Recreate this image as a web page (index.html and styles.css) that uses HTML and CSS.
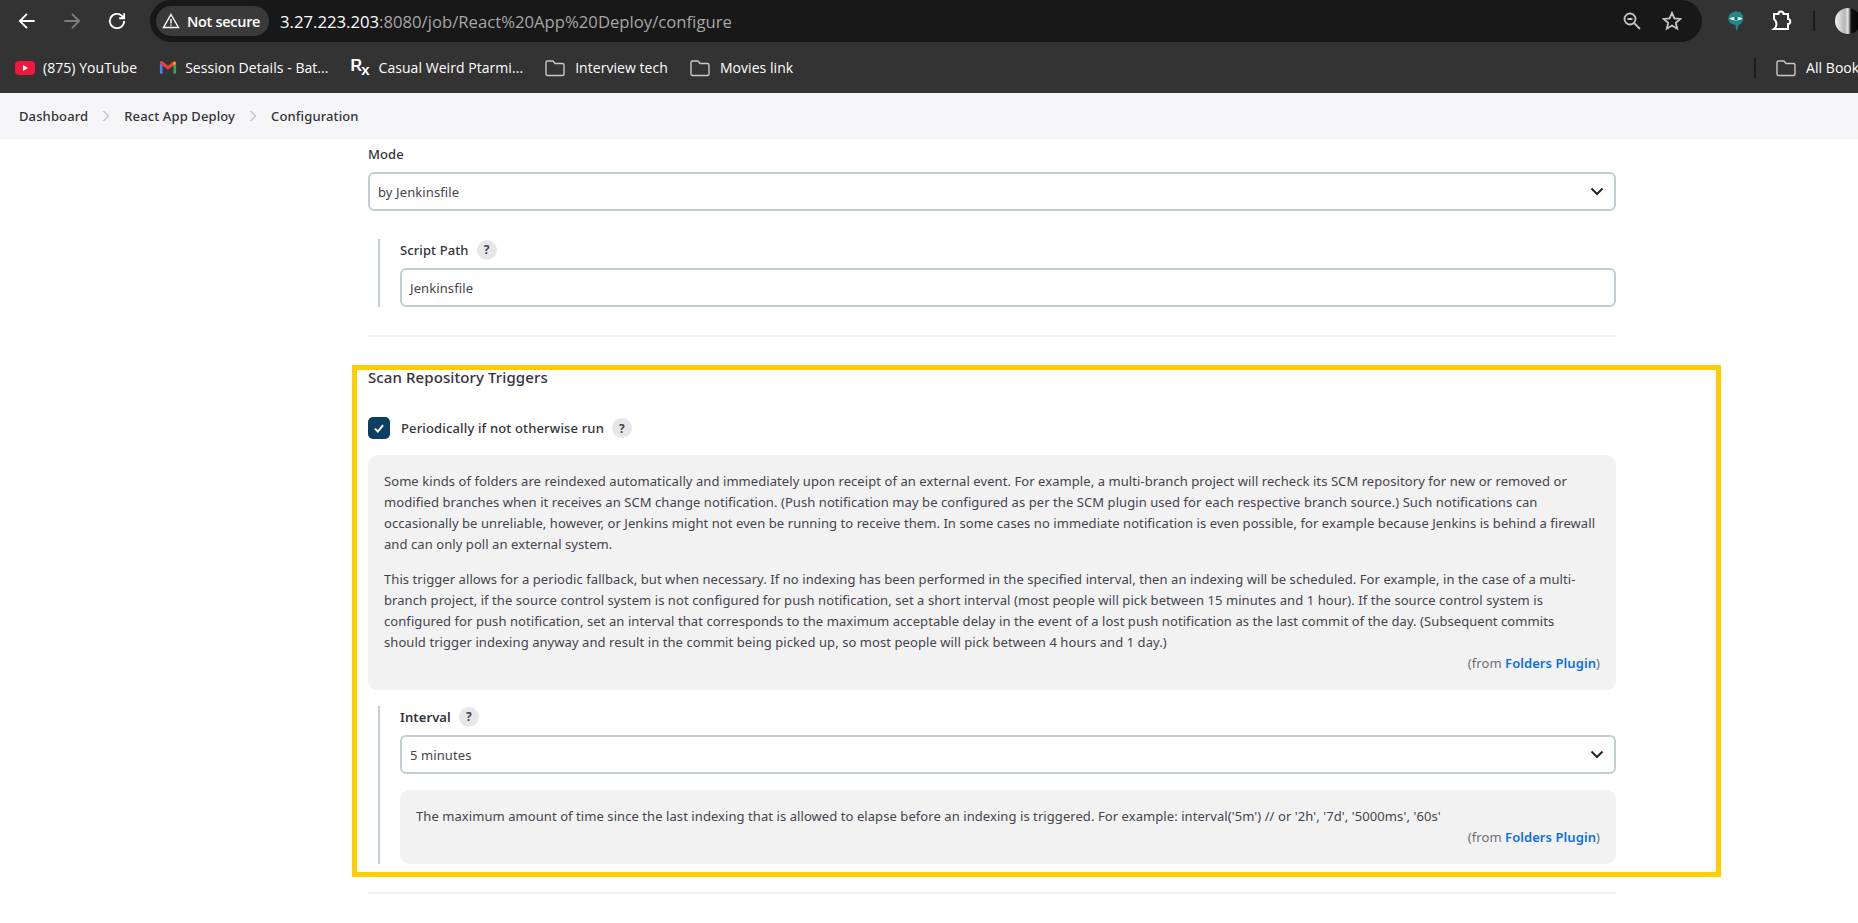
FILE: index.html
```html
<!DOCTYPE html>
<html>
<head>
    <title>React App Deploy Config [Jenkins]</title>
    <link rel="stylesheet" href="styles.css">
</head>
<body>
    <div class="browser">
        <div class="toolbar">
            <div class="nav">
                <svg class="nav-icon" viewBox="0 0 20 20"><path d="M17 10H3.500M10 3.500L3.500 10l6.500 6.500"/></svg>
                <svg class="nav-icon off" viewBox="0 0 20 20"><path d="M3 10h13.500M10 3.500l6.500 6.500-6.500 6.500"/></svg>
                <svg class="nav-icon" viewBox="0 0 20 20"><path d="M16.500 10a6.500 6.500 0 1 1-2-4.700L16.500 7.500M16.500 3v4.500H12"/></svg>
            </div>
            <div class="omnibox">
                <div class="chip">
                    <svg class="warn" viewBox="0 0 18 18"><path d="M9 2.500L16.500 15.500H1.500ZM9 7v4.500M9 12.500v1.200"/></svg>
                    <span>Not secure</span>
                </div>
                <div class="url"><b>3.27.223.203</b>:8080/job/React%20App%20Deploy/configure</div>
                <svg class="omni-icon zoom-out" viewBox="0 0 20 20"><circle cx="8" cy="8" r="5.500"/><path d="M5.500 8h5M12.200 12.200L18 18"/></svg>
                <svg class="omni-icon star" viewBox="0 0 20 20"><path d="M10 1.800l2.400 5.600 6 .5-4.600 3.900 1.400 5.900L10 14.600l-5.200 3.100 1.400-5.900L1.600 7.900l6-.5Z"/></svg>
            </div>
            <svg class="ext" viewBox="0 0 16 20"><path class="ext-body" d="M8 0l2 1 2.500-.2.800 2 2 1.400-.5 2.300.7 2.300-1.500 2-1 2.200-2.500.7L9 20l-1-2-.5-4.300-2.500-.2-2.500-1.200L1 10.200 0 8l.7-2.500L1.500 3.500 3.500 2 6 1Z"/><path class="ext-eye" d="M1.500 7.500C4 5.500 12 5.500 14.500 7.500 12 10 4 10 1.500 7.500Z"/><rect class="ext-pupil" x="6.500" y="6" width="3" height="3"/></svg>
            <svg class="puzzle" viewBox="0 0 24 24"><path d="M5 5h4.500c0-3.500 5-3.500 5 0H19v5c3 0 3 5 0 5v5H5c2-1.500 2.500-3 2.500-4.500S7 11.500 5 10Z"/></svg>
            <div class="sep"></div>
            <div class="avatar"></div>
        </div>
        <div class="bookmarks">
            <div class="bookmark">
                <svg class="favicon" viewBox="0 0 20 14"><rect width="20" height="14" rx="4" fill="#f6163c"/><path d="M8 4l5 3-5 3Z" fill="#fff"/></svg>
                <span>(875) YouTube</span>
            </div>
            <div class="bookmark">
                <svg class="gmail" viewBox="0 0 20 16"><path d="M1 15V3l3 2v10Z" fill="#4285f4"/><path d="M19 15V3l-3 2v10Z" fill="#34a853"/><path d="M1 3c0-2 2-3 3.500-1.500L10 6l5.500-4.500C17 0 19 1 19 3l-3 3-6 4.500L4 6Z" fill="#ea4335"/><path d="M16 2l3 1-3 3Z" fill="#fbbc04"/></svg>
                <span>Session Details - Bat...</span>
            </div>
            <div class="bookmark">
                <span class="rx">R<sub>x</sub></span>
                <span>Casual Weird Ptarmi...</span>
            </div>
            <div class="bookmark folder-mark">
                <svg class="folder" viewBox="0 0 20 18"><path d="M1 3.500C1 2.500 1.500 2 2.500 2H8l2 2.500h7.500c1 0 1.500.5 1.500 1.500v9c0 1-.5 1.500-1.500 1.500h-15C1.500 16.500 1 16 1 15Z"/></svg>
                <span>Interview tech</span>
            </div>
            <div class="bookmark folder-mark">
                <svg class="folder" viewBox="0 0 20 18"><path d="M1 3.500C1 2.500 1.500 2 2.500 2H8l2 2.500h7.500c1 0 1.500.5 1.500 1.500v9c0 1-.5 1.500-1.500 1.500h-15C1.500 16.500 1 16 1 15Z"/></svg>
                <span>Movies link</span>
            </div>
            <div class="all-bookmarks">
                <div class="sep"></div>
                <div class="bookmark folder-mark">
                    <svg class="folder" viewBox="0 0 20 18"><path d="M1 3.500C1 2.500 1.500 2 2.500 2H8l2 2.500h7.500c1 0 1.500.5 1.500 1.500v9c0 1-.5 1.500-1.500 1.500h-15C1.500 16.500 1 16 1 15Z"/></svg>
                    <span>All Bookmarks</span>
                </div>
            </div>
        </div>
    </div>

    <div class="breadcrumbs">
        <span>Dashboard</span>
        <svg class="crumb-sep" viewBox="0 0 8 12"><path d="M1.500 1l5 5-5 5"/></svg>
        <span>React App Deploy</span>
        <svg class="crumb-sep" viewBox="0 0 8 12"><path d="M1.500 1l5 5-5 5"/></svg>
        <span>Configuration</span>
    </div>

    <div class="page">
        <div class="form">
            <div class="label">Mode</div>
            <div class="select">
                <span>by Jenkinsfile</span>
                <svg class="caret" viewBox="0 0 14 9"><path d="M1.500 1.500L7 7l5.500-5.500"/></svg>
            </div>

            <div class="nested script-path">
                <div class="label with-help">Script Path <span class="help">?</span></div>
                <div class="input">Jenkinsfile</div>
            </div>

            <div class="divider first"></div>

            <div class="highlight">
                <h3 class="section">Scan Repository Triggers</h3>

                <div class="check-row">
                    <span class="checkbox"><svg viewBox="0 0 12 12"><path d="M2.500 6.500L5 9l4.500-5.500"/></svg></span>
                    <span class="check-label">Periodically if not otherwise run</span>
                    <span class="help">?</span>
                </div>

                <div class="help-box">
                    <p>Some kinds of folders are reindexed automatically and immediately upon receipt of an external event. For example, a multi-branch project will recheck its SCM repository for new or removed or modified branches when it receives an SCM change notification. (Push notification may be configured as per the SCM plugin used for each respective branch source.) Such notifications can occasionally be unreliable, however, or Jenkins might not even be running to receive them. In some cases no immediate notification is even possible, for example because Jenkins is behind a firewall and can only poll an external system.</p>
                    <p>This trigger allows for a periodic fallback, but when necessary. If no indexing has been performed in the specified interval, then an indexing will be scheduled. For example, in the case of a multi-branch project, if the source control system is not configured for push notification, set a short interval (most people will pick between 15 minutes and 1 hour). If the source control system is configured for push notification, set an interval that corresponds to the maximum acceptable delay in the event of a lost push notification as the last commit of the day. (Subsequent commits should trigger indexing anyway and result in the commit being picked up, so most people will pick between 4 hours and 1 day.)</p>
                    <div class="from">(from <a>Folders Plugin</a>)</div>
                </div>

                <div class="nested interval">
                    <div class="label with-help strong">Interval <span class="help">?</span></div>
                    <div class="select">
                        <span>5 minutes</span>
                        <svg class="caret" viewBox="0 0 14 9"><path d="M1.500 1.500L7 7l5.500-5.500"/></svg>
                    </div>
                    <div class="help-box small">
                        <p>The maximum amount of time since the last indexing that is allowed to elapse before an indexing is triggered. For example: interval('5m') // or '2h', '7d', '5000ms', '60s'</p>
                        <div class="from">(from <a>Folders Plugin</a>)</div>
                    </div>
                </div>
            </div>

            <div class="divider last"></div>
        </div>
    </div>
</body>
</html>
```

FILE: styles.css
```css
* { box-sizing: border-box; }
html, body { margin: 0; height: 923px; overflow: hidden; }
body { font-family: "Noto Sans", sans-serif; font-size: 13px; letter-spacing: 0.1px; color: #333339; background: #fff; }

.browser { background: #333; height: 93px; color: #fff; font-family: "Open Sans", sans-serif; letter-spacing: 0; }
.toolbar { height: 42px; display: flex; align-items: center; overflow: hidden; }
.toolbar > * { flex: none; }
.nav { display: flex; gap: 23px; padding-left: 16px; width: 150px; }
.nav-icon { width: 22px; height: 22px; fill: none; stroke: #fff; stroke-width: 1.7; }
.nav-icon.off { stroke: #7c7c7c; }
.omnibox { width: 1552px; height: 42px; background: #181818; border-radius: 21px; display: flex; align-items: center; padding-left: 6px; }
.chip { display: flex; align-items: center; gap: 7px; height: 30px; width: 113px; padding-left: 6px; background: #3a3a3a; border-radius: 15px; font-size: 14.5px; font-weight: 600; letter-spacing: -0.3px; white-space: nowrap; flex: none; }
.warn { width: 18px; height: 18px; fill: none; stroke: #fff; stroke-width: 1.4; flex: none; }
.url { margin-left: 11px; font-size: 16.7px; color: #a6a6a6; flex: 1; white-space: nowrap; }
.url b { font-weight: 400; color: #fff; }
.omni-icon { fill: none; stroke: #c4c4c4; stroke-width: 1.8; width: 20px; height: 20px; flex: none; }
.zoom-out { margin-right: 20px; }
.star { margin-right: 20px; }
.ext { width: 16px; height: 20px; margin-left: 26px; }
.ext-body { fill: #1d8a85; }
.ext-eye { fill: #e8f4f4; }
.ext-pupil { fill: #1d5f5c; }
.puzzle { width: 24px; height: 24px; margin-left: 25px; fill: none; stroke: #fff; stroke-width: 2; }
.sep { width: 2px; height: 20px; background: #1c1c1c; }
.toolbar .sep { margin-left: 20px; }
.avatar { width: 26px; height: 26px; border-radius: 50%; margin-left: 20px; background: linear-gradient(90deg, #f2f2f2 0, #b5b5b5 38%, #e6e6e6 50%, #111 62%, #000 100%); }

.bookmarks { height: 51px; padding-left: 15px; display: flex; align-items: center; gap: 22px; font-size: 14px; letter-spacing: 0.05px; white-space: nowrap; overflow: hidden; }
.bookmark { display: flex; align-items: center; gap: 8px; flex: none; }
.favicon { width: 20px; height: 14px; }
.gmail { width: 18px; height: 15px; }
.rx { font-family: "Liberation Sans", sans-serif; font-weight: 700; font-size: 16px; width: 20px; line-height: 16px; margin-top: -3px; }
.rx sub { font-size: 15px; line-height: 0; margin-left: -1px; }
.folder-mark { gap: 10px; }
.folder { width: 20px; height: 18px; fill: none; stroke: #c7c7c7; stroke-width: 1.4; }
.all-bookmarks { display: flex; align-items: center; gap: 20px; margin-left: auto; margin-right: -42px; flex: none; }

.breadcrumbs { height: 46px; background: #f5f5f8; display: flex; align-items: center; padding-left: 19px; font-weight: 500; letter-spacing: 0.12px; }
.crumb-sep { width: 8px; height: 12px; margin: 0 14px; fill: none; stroke: #9a9aa2; stroke-width: 1; }

.page { padding-left: 368px; }
.form { width: 1248px; padding-top: 5px; }
.label { font-weight: 500; line-height: 20px; color: #333339; }
.select, .input { height: 39px; border: 2px solid #c3ced3; border-radius: 6px; background: #fff; display: flex; align-items: center; justify-content: space-between; padding: 0 8px; color: #44444c; }
.label + .select { margin-top: 8px; }
.with-help + .select { margin-top: 7px; }
.caret { width: 14px; height: 9px; margin-right: 2px; fill: none; stroke: #25252b; stroke-width: 2; }
.nested { margin-left: 10px; padding-left: 20px; border-left: 2px solid #c3ced3; }
.script-path { margin-top: 28px; height: 68px; }
.with-help { display: flex; align-items: center; gap: 8px; height: 22px; margin-bottom: 7px; }
.help { width: 20px; height: 20px; border-radius: 50%; background: #e7e7e9; display: inline-flex; align-items: center; justify-content: center; font-size: 12px; font-weight: 700; color: #44444c; flex: none; }
.divider { height: 2px; background: #f3f3f7; }
.divider.first { margin-top: 28px; }
.divider.last { margin-top: 15px; }

.highlight { margin: 28px 0 0 -16px; padding: 0 100px 0 11px; height: 512px; width: 1369px; border: 5px solid #ffcd00; }
.section { margin: -1px 0 0; font-size: 15px; font-weight: 500; line-height: 17px; }
.check-row { display: flex; align-items: center; margin-top: 31px; height: 22px; }
.checkbox { width: 22px; height: 22px; background: #0b3f63; border-radius: 5px; display: flex; align-items: center; justify-content: center; }
.checkbox svg { width: 14px; height: 14px; fill: none; stroke: #fff; stroke-width: 1.6; }
.check-label { margin-left: 11px; margin-right: 8px; font-weight: 500; letter-spacing: 0.15px; }
.help-box { margin-top: 16px; height: 235px; background: #f2f2f3; border-radius: 10px; padding: 16px; line-height: 21px; color: #44444c; letter-spacing: 0.07px; }
.help-box p { margin: 0 0 14px; padding-right: 3px; }
.help-box p:last-of-type { margin-bottom: 0; }
.from { text-align: right; color: #6f6f76; }
.from a { color: #0b6fe0; font-weight: 600; }
.interval { margin-top: 16px; height: 158px; }
.strong { font-weight: 600; }
.help-box.small { height: 74px; }
```
